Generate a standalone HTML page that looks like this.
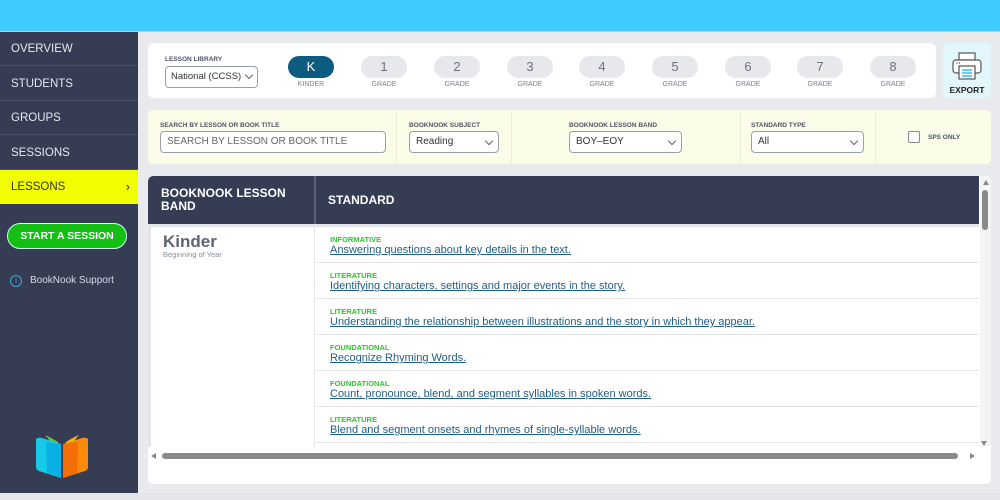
<!DOCTYPE html>
<html><head><style>
*{margin:0;padding:0;box-sizing:border-box}
body{width:1000px;height:500px;overflow:hidden;background:#e9eaee;font-family:"Liberation Sans",sans-serif;position:relative}
.abs{position:absolute}
.top{left:0;top:0;width:1000px;height:32px;background:#3ecbff;border-bottom:1px solid #8fe0ff}
.side{left:0;top:32px;width:138px;height:461px;background:#353c54}
.nav{position:absolute;left:0;width:138px;height:34px;color:#e6e8ee;font-size:11.5px;line-height:34px;padding-left:11px;border-bottom:1px solid #4a5168}
.bottom{left:0;top:493px;width:1000px;height:7px;background:#e4e5e9}
.card{background:#fff;border-radius:6px}
.pill{position:absolute;top:13px;width:46px;height:22px;border-radius:11px;background:#e6e8ec;color:#6b7180;font-size:13px;text-align:center;line-height:22px}
.gl{position:absolute;top:38px;width:46px;text-align:center;font-size:7px;color:#7b8190}
.lbl{position:absolute;font-size:6.5px;font-weight:bold;color:#4d5366}
.sel{position:absolute;height:22px;border:1px solid #9aa0ab;border-radius:4px;background:#fff;font-size:10px;color:#333;line-height:20px;padding-left:6px;white-space:nowrap}
.chev{position:absolute;right:6px;top:6px;width:6px;height:6px;border-right:1px solid #666;border-bottom:1px solid #666;transform:rotate(45deg)}
.row{position:absolute;left:316px;width:663px;height:36px;border-bottom:1px solid #e3e5ea}
.cat{position:absolute;left:14px;top:8px;font-size:7.5px;color:#2ec42e;font-weight:bold}
.lnk{position:absolute;left:14px;top:17px;font-size:11px;color:#1e5f86;text-decoration:underline;white-space:nowrap}
</style></head><body>
<div class="abs top"></div>
<div class="abs side">
 <div class="nav" style="top:0">OVERVIEW</div>
 <div class="nav" style="top:35px">STUDENTS</div>
 <div class="nav" style="top:69px">GROUPS</div>
 <div class="nav" style="top:104px">SESSIONS</div>
 <div class="nav" style="top:138px;background:#f2ff00;color:#333;border:none">LESSONS<span style="position:absolute;right:8px;top:0;font-size:13px">›</span></div>
 <div style="position:absolute;left:7px;top:191px;width:120px;height:26px;border-radius:13px;background:#13bf13;border:1px solid #cfe;color:#fff;font-size:10.5px;font-weight:bold;text-align:center;line-height:24px">START A SESSION</div>
 <div style="position:absolute;left:10px;top:243px;width:12px;height:12px;border:1px solid #3aa9d8;border-radius:50%;color:#3aa9d8;font-size:8px;text-align:center;line-height:10px">i</div>
 <div style="position:absolute;left:30px;top:243px;font-size:10px;color:#d8dbe3">BookNook Support</div>
 <svg style="position:absolute;left:34px;top:402px" width="56" height="48" viewBox="0 0 56 48">
  <path d="M11 1 Q14 2 24 8 L24 16 Z" fill="#69c53a"/>
  <path d="M45 1 Q42 2 32 8 L32 16 Z" fill="#ffc000"/>
  <path d="M2 5 Q4 3 8 4 L27 10 L27 44 L5 37 Q2 36 2 33 Z" fill="#16c9e6"/>
  <path d="M12 8 L27 10 L27 44 L13 39 Z" fill="#09b0e6"/>
  <path d="M54 5 Q52 3 48 4 L29 10 L29 44 L51 37 Q54 36 54 33 Z" fill="#fb8a0b"/>
  <path d="M44 8 L29 10 L29 44 L43 39 Z" fill="#f36f06"/>
 </svg>
</div>
<div class="abs bottom"></div>

<div class="abs card" style="left:148px;top:43px;width:788px;height:55px">
 <div class="lbl" style="left:17px;top:13px">LESSON LIBRARY</div>
 <div class="sel" style="left:17px;top:23px;width:93px;font-size:9.5px;padding-left:5px">National (CCSS)<div class="chev" style="right:5px;top:5px"></div></div>
 <div class="pill" style="left:140px;background:#0d5c80;color:#fff">K</div><div class="gl" style="left:140px">KINDER</div>
 <div class="pill" style="left:213px">1</div><div class="gl" style="left:213px">GRADE</div>
 <div class="pill" style="left:286px">2</div><div class="gl" style="left:286px">GRADE</div>
 <div class="pill" style="left:359px">3</div><div class="gl" style="left:359px">GRADE</div>
 <div class="pill" style="left:431px">4</div><div class="gl" style="left:431px">GRADE</div>
 <div class="pill" style="left:504px">5</div><div class="gl" style="left:504px">GRADE</div>
 <div class="pill" style="left:577px">6</div><div class="gl" style="left:577px">GRADE</div>
 <div class="pill" style="left:649px">7</div><div class="gl" style="left:649px">GRADE</div>
 <div class="pill" style="left:722px">8</div><div class="gl" style="left:722px">GRADE</div>
</div>
<div class="abs" style="left:943px;top:43px;width:48px;height:55px;background:#e3f6fc;border-radius:5px">
 <svg style="position:absolute;left:9px;top:9px" width="30" height="28" viewBox="0 0 30 28">
  <rect x="7" y="1" width="16" height="7" fill="#fff" stroke="#555" stroke-width="1.2"/>
  <rect x="1" y="8" width="28" height="13" rx="3" fill="#fff" stroke="#555" stroke-width="1.2"/>
  <rect x="7" y="14" width="16" height="13" fill="#fff" stroke="#555" stroke-width="1.2"/>
  <line x1="10" y1="18" x2="20" y2="18" stroke="#1ab0e8" stroke-width="1.3"/>
  <line x1="10" y1="21" x2="20" y2="21" stroke="#1ab0e8" stroke-width="1.3"/>
  <line x1="10" y1="24" x2="20" y2="24" stroke="#1ab0e8" stroke-width="1.3"/>
  <circle cx="5" cy="11" r=".7" fill="#555"/><circle cx="7.5" cy="11" r=".7" fill="#555"/>
 </svg>
 <div style="position:absolute;left:0;top:42px;width:48px;text-align:center;font-size:8.5px;font-weight:bold;color:#222">EXPORT</div>
</div>

<div class="abs" style="left:148px;top:110px;width:843px;height:54px;background:#fbfde9;border-radius:5px">
 <div style="position:absolute;left:248px;top:0;width:1px;height:54px;background:#ecefd6"></div>
 <div style="position:absolute;left:363px;top:0;width:1px;height:54px;background:#ecefd6"></div>
 <div style="position:absolute;left:592px;top:0;width:1px;height:54px;background:#ecefd6"></div>
 <div style="position:absolute;left:727px;top:0;width:1px;height:54px;background:#ecefd6"></div>
 <div class="lbl" style="left:12px;top:12px">SEARCH BY LESSON OR BOOK TITLE</div>
 <div class="sel" style="left:12px;top:21px;width:226px;color:#666">SEARCH BY LESSON OR BOOK TITLE</div>
 <div class="lbl" style="left:261px;top:12px">BOOKNOOK SUBJECT</div>
 <div class="sel" style="left:261px;top:21px;width:90px">Reading<div class="chev"></div></div>
 <div class="lbl" style="left:421px;top:12px">BOOKNOOK LESSON BAND</div>
 <div class="sel" style="left:421px;top:21px;width:113px">BOY–EOY<div class="chev"></div></div>
 <div class="lbl" style="left:603px;top:12px">STANDARD TYPE</div>
 <div class="sel" style="left:603px;top:21px;width:113px">All<div class="chev"></div></div>
 <div style="position:absolute;left:760px;top:21px;width:12px;height:12px;border:1px solid #888;border-radius:2px;background:#fff"></div>
 <div class="lbl" style="left:780px;top:24px">SPS ONLY</div>
</div>

<div class="abs" style="left:148px;top:176px;width:843px;height:308px;background:#fff;border-radius:5px;overflow:hidden">
 <div style="position:absolute;left:0;top:0;width:831px;height:48px;background:#353c54;border-radius:5px 0 0 0"></div>
 <div style="position:absolute;left:166px;top:0;width:2px;height:48px;background:#5a6078"></div>
 <div style="position:absolute;left:13px;top:11px;color:#fff;font-size:12px;font-weight:bold;line-height:13px">BOOKNOOK LESSON<br>BAND</div>
 <div style="position:absolute;left:180px;top:17px;color:#fff;font-size:12px;font-weight:bold">STANDARD</div>
 <div style="position:absolute;left:0;top:48px;width:831px;height:3px;background:#e3e5ea"></div>
 <div style="position:absolute;left:0;top:51px;width:3px;height:220px;background:#e3e5ea"></div>
 <div style="position:absolute;left:166px;top:51px;width:1px;height:220px;background:#e3e5ea"></div>
 <div style="position:absolute;left:15px;top:56px;font-size:17px;font-weight:bold;color:#5f6578">Kinder</div>
 <div style="position:absolute;left:15px;top:74px;font-size:7.5px;color:#8a8fa0">Beginning of Year</div>
 <div style="position:absolute;left:832px;top:0;width:11px;height:270px;background:#f4f4f4"></div>
 <div style="position:absolute;left:835px;top:4px;width:0;height:0;border-left:3px solid transparent;border-right:3px solid transparent;border-bottom:5px solid #888"></div>
 <div style="position:absolute;left:834px;top:14px;width:6px;height:40px;border-radius:3px;background:#8a8a8a"></div>
 <div style="position:absolute;left:833px;top:265px;width:0;height:0;border-left:3px solid transparent;border-right:3px solid transparent;border-top:5px solid #888"></div>
 <div style="position:absolute;left:3px;top:277px;width:0;height:0;border-top:3px solid transparent;border-bottom:3px solid transparent;border-right:5px solid #888"></div>
 <div style="position:absolute;left:14px;top:277px;width:796px;height:6px;border-radius:3px;background:#8a8a8a"></div>
 <div style="position:absolute;left:822px;top:277px;width:0;height:0;border-top:3px solid transparent;border-bottom:3px solid transparent;border-left:5px solid #888"></div>
</div>
<div class="row" style="top:227px"><div class="cat">INFORMATIVE</div><div class="lnk">Answering questions about key details in the text.</div></div>
<div class="row" style="top:263px"><div class="cat">LITERATURE</div><div class="lnk">Identifying characters, settings and major events in the story.</div></div>
<div class="row" style="top:299px"><div class="cat">LITERATURE</div><div class="lnk">Understanding the relationship between illustrations and the story in which they appear.</div></div>
<div class="row" style="top:335px"><div class="cat">FOUNDATIONAL</div><div class="lnk">Recognize Rhyming Words.</div></div>
<div class="row" style="top:371px"><div class="cat">FOUNDATIONAL</div><div class="lnk">Count, pronounce, blend, and segment syllables in spoken words.</div></div>
<div class="row" style="top:407px"><div class="cat">LITERATURE</div><div class="lnk">Blend and segment onsets and rhymes of single-syllable words.</div></div>
</body></html>
